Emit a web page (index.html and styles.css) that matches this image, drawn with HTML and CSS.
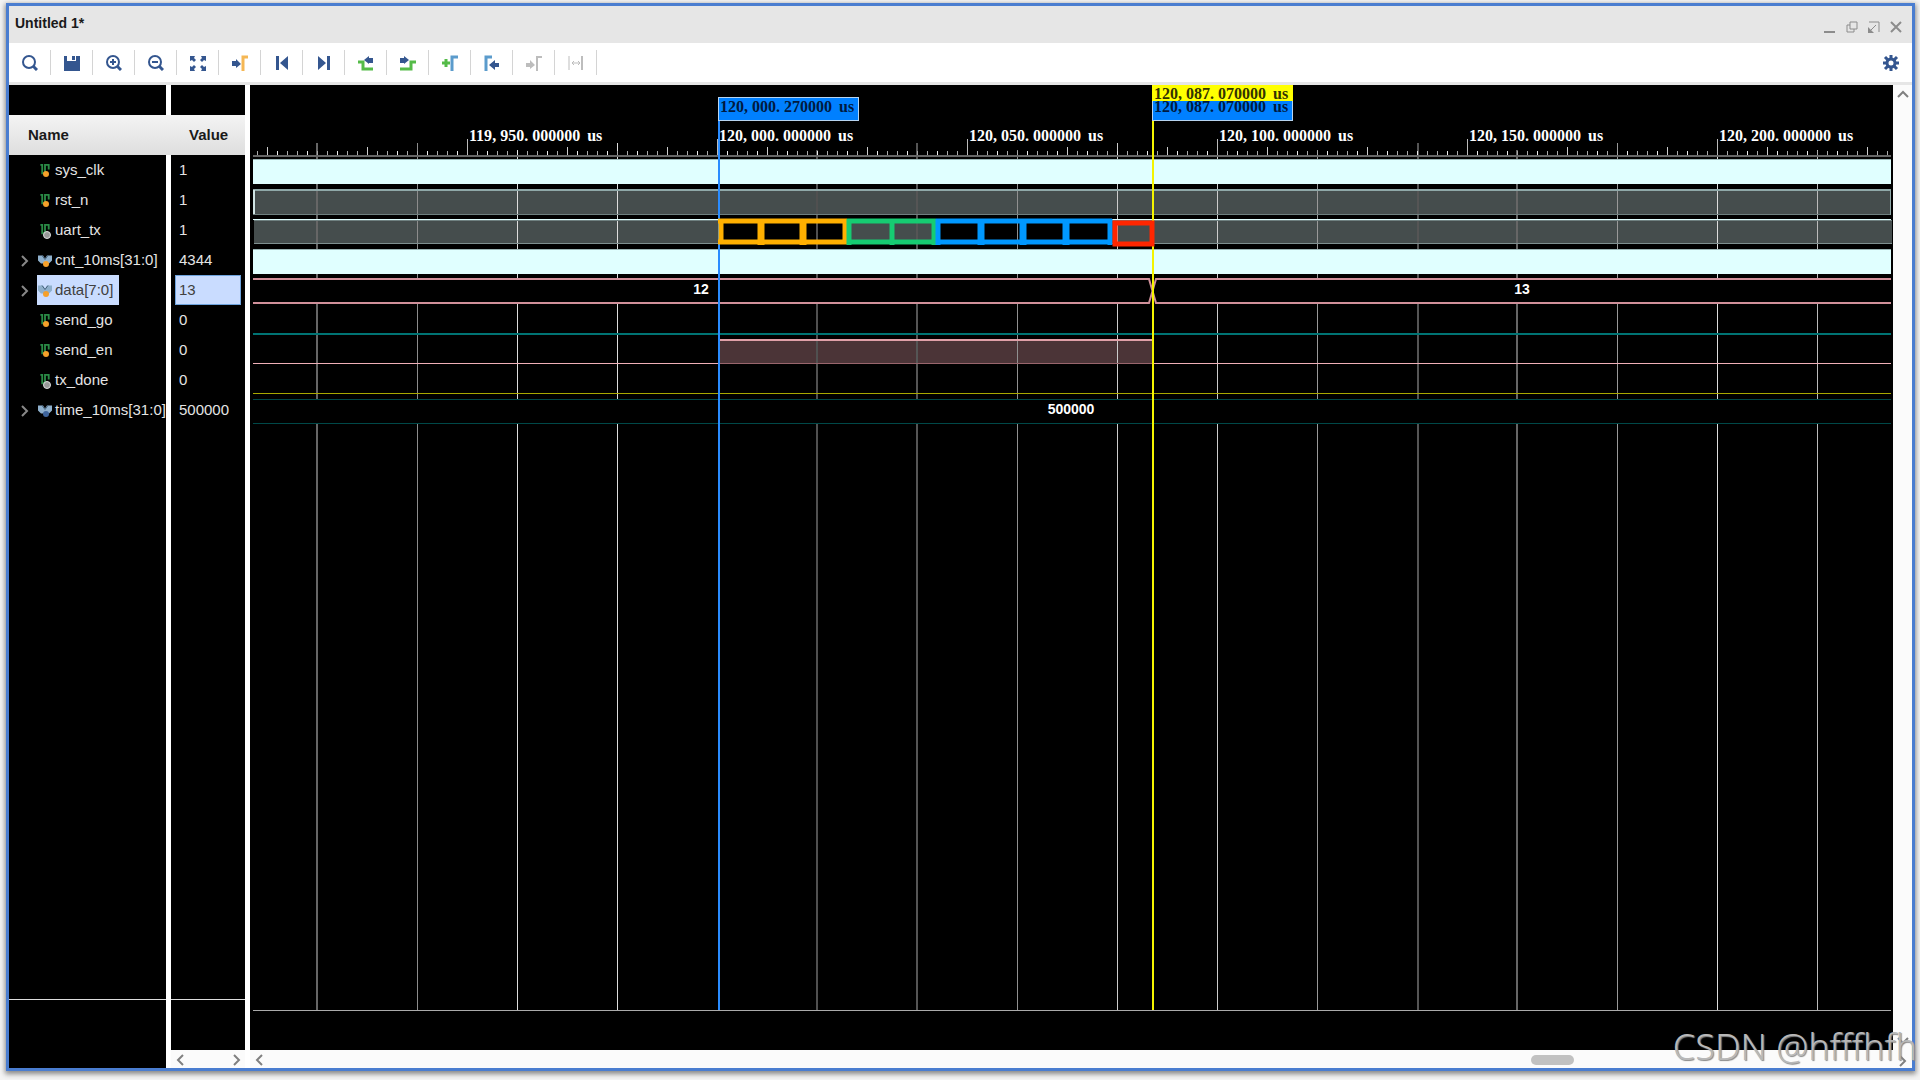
FILE: index.html
```html
<!DOCTYPE html>
<html lang="en">
<head>
<meta charset="utf-8">
<title>Untitled 1*</title>
<link rel="stylesheet" href="styles.css">
</head>
<body>
<svg class="defs" aria-hidden="true">
  <symbol id="scalar" viewBox="0 0 12 14"><path d="M1 1h2v9h3M6 10V1h4v5" fill="none" stroke="#2a8a45" stroke-width="2"/></symbol>
  <symbol id="bus" viewBox="0 0 14 12"><path d="M0 1h5l2 3 2-3h5v5l-3 3H3L0 6z" fill="#8fb0cc"/><path d="M4 1l3 4 3-4" fill="none" stroke="#46647e"/></symbol>
  <symbol id="chev" viewBox="0 0 8 12"><path d="M1 1l5 5-5 5" fill="none" stroke="currentColor" stroke-width="2"/></symbol>
</svg>
<main class="window">
  <header class="titlebar">
    <h1>Untitled 1*</h1>
    <div class="controls">
      <button aria-label="Minimize"><svg width="14" height="14"><path d="M1 12h11" stroke-width="2"/></svg></button>
      <button aria-label="Restore"><svg width="14" height="14"><path d="M5 2h7v7H5zM5 5H2v7h7V9" /></svg></button>
      <button aria-label="Float"><svg width="14" height="14"><path d="M2 2h10v10M9 5L4 10"/><path class="tip" d="M1 7v6h6z"/></svg></button>
      <button aria-label="Close"><svg width="14" height="14"><path d="M2 2l10 10M12 2L2 12" stroke-width="2"/></svg></button>
    </div>
  </header>
  <nav class="toolbar">
    <button aria-label="Search"><svg viewBox="0 0 16 16"><circle cx="7" cy="7" r="6"/><path d="M11 11l4 4" stroke-width="3"/></svg></button>
    <button aria-label="Save"><svg viewBox="0 0 16 16"><path class="f" d="M0 1h3v5h9V1h4v15H0zM8 1h3v4H8z"/></svg></button>
    <button aria-label="Zoom in"><svg viewBox="0 0 16 16"><circle cx="7" cy="7" r="6"/><path d="M11 11l4 4" stroke-width="3"/><path d="M4 7h6M7 4v6"/></svg></button>
    <button aria-label="Zoom out"><svg viewBox="0 0 16 16"><circle cx="7" cy="7" r="6"/><path d="M11 11l4 4" stroke-width="3"/><path d="M4 7h6"/></svg></button>
    <button aria-label="Zoom fit"><svg viewBox="0 0 16 16"><path class="f" d="M0 1h5L4 3l2 2-2 2-2-2-2 1zM16 1v5l-2-1-2 2-2-2 2-2-1-2zM0 16v-5l2 1 2-2 2 2-2 2 1 2zM16 16h-5l1-2-2-2 2-2 2 2 2-1z"/></svg></button>
    <button aria-label="Go to cursor"><svg viewBox="0 0 16 16"><path class="f" d="M0 6h4V4l5 5-5 4v-2H0z"/><path class="amber" d="M11 16V2h5"/></svg></button>
    <button aria-label="Go to start"><svg viewBox="0 0 16 16"><path class="f" d="M2 1h3v14H2zM14 1v14L6 8z"/></svg></button>
    <button aria-label="Go to end"><svg viewBox="0 0 16 16"><path class="f" d="M2 1v14l8-7zM11 1h3v14h-3z"/></svg></button>
    <button aria-label="Previous transition"><svg viewBox="0 0 16 16"><path class="green" d="M0 7h5v7h10"/><path class="f" d="M15 3h-4V1L6 5l5 4V8h4z"/></svg></button>
    <button aria-label="Next transition"><svg viewBox="0 0 16 16"><path class="green" d="M0 14h11V7h5"/><path class="f" d="M0 3h4V1l5 4-5 4V8H0z"/></svg></button>
    <button aria-label="Add marker"><svg viewBox="0 0 16 16"><path class="green" d="M0 8h8M4 4v8"/><path class="sky" d="M10 16V2h6"/></svg></button>
    <button aria-label="Previous marker"><svg viewBox="0 0 16 16"><path class="sky" d="M2 16V2h6"/><path class="f" d="M15 8h-4V5l-6 5 6 5v-3h4z"/></svg></button>
    <button aria-label="Next marker" disabled><svg viewBox="0 0 16 16"><path class="f" d="M0 8h4V5l5 5-5 4v-2H0z"/><path d="M11 16V2h5"/></svg></button>
    <button aria-label="Swap cursors" disabled><svg viewBox="0 0 16 16"><path d="M1 1v14M4 8h8M6 6L4 8l2 2M10 6l2 2-2 2" stroke-width="1"/><path d="M14 1v14"/></svg></button>
    <button class="settings" aria-label="Settings"><svg viewBox="0 0 16 16"><circle cx="8" cy="8" r="4" stroke-width="3"/><path d="M8 0v4M8 12v4M0 8h4M12 8h4M2 2l3 3M11 11l3 3M14 2l-3 3M5 11l-3 3" stroke-width="3"/></svg></button>
  </nav>
  <div class="panes">
    <section class="pane names">
      <table>
        <thead><tr><th>Name</th></tr></thead>
        <tbody>
          <tr><td><span class="sig in"><svg><use href="#scalar"/></svg>sys_clk</span></td></tr>
          <tr><td><span class="sig in"><svg><use href="#scalar"/></svg>rst_n</span></td></tr>
          <tr><td><span class="sig out"><svg><use href="#scalar"/></svg>uart_tx</span></td></tr>
          <tr><td><button class="expand" aria-label="Expand cnt_10ms"><svg><use href="#chev"/></svg></button><span class="sig in"><svg><use href="#bus"/></svg>cnt_10ms[31:0]</span></td></tr>
          <tr><td><button class="expand" aria-label="Expand data"><svg><use href="#chev"/></svg></button><span class="sig in selected"><svg><use href="#bus"/></svg>data[7:0]</span></td></tr>
          <tr><td><span class="sig in"><svg><use href="#scalar"/></svg>send_go</span></td></tr>
          <tr><td><span class="sig in"><svg><use href="#scalar"/></svg>send_en</span></td></tr>
          <tr><td><span class="sig out"><svg><use href="#scalar"/></svg>tx_done</span></td></tr>
          <tr><td><button class="expand" aria-label="Expand time_10ms"><svg><use href="#chev"/></svg></button><span class="sig param"><svg><use href="#bus"/></svg>time_10ms[31:0]</span></td></tr>
        </tbody>
      </table>
      <div class="foot"></div>
    </section>
    <section class="pane values">
      <table>
        <thead><tr><th>Value</th></tr></thead>
        <tbody>
          <tr><td>1</td></tr><tr><td>1</td></tr><tr><td>1</td></tr><tr><td>4344</td></tr>
          <tr><td><span class="picked">13</span></td></tr>
          <tr><td>0</td></tr><tr><td>0</td></tr><tr><td>0</td></tr><tr><td>500000</td></tr>
        </tbody>
      </table>
      <div class="foot"></div>
      <div class="hscroll">
        <button aria-label="Scroll left"><svg class="flip"><use href="#chev"/></svg></button>
        <button aria-label="Scroll right"><svg><use href="#chev"/></svg></button>
      </div>
    </section>
    <section class="wave">
      <div class="canvas">
        <svg id="plot" aria-hidden="true"></svg>
        <span class="time" style="left:217px">119<i>,</i>950<i>.</i>000000 <b>us</b></span>
        <span class="time" style="left:467px">120<i>,</i>000<i>.</i>000000 <b>us</b></span>
        <span class="time" style="left:717px">120<i>,</i>050<i>.</i>000000 <b>us</b></span>
        <span class="time" style="left:967px">120<i>,</i>100<i>.</i>000000 <b>us</b></span>
        <span class="time" style="left:1217px">120<i>,</i>150<i>.</i>000000 <b>us</b></span>
        <span class="time" style="left:1467px">120<i>,</i>200<i>.</i>000000 <b>us</b></span>
        <span class="time flag" style="left:468px">120<i>,</i>000<i>.</i>270000 <b>us</b></span>
        <span class="time flag" style="left:902px">120<i>,</i>087<i>.</i>070000 <b>us</b></span>
        <span class="time flag cursor" style="left:902px">120<i>,</i>087<i>.</i>070000 <b>us</b></span>
        <span class="val data" style="left:451px">12</span>
        <span class="val data" style="left:1272px">13</span>
        <span class="val param" style="left:821px">500000</span>
      </div>
      <div class="hscroll">
        <button aria-label="Scroll left"><svg class="flip"><use href="#chev"/></svg></button>
        <div class="track"><div class="thumb"></div></div>
      </div>
    </section>
    <div class="vscroll">
      <button aria-label="Scroll up"><svg class="up"><use href="#chev"/></svg></button>
      <div class="ends">
        <button aria-label="Scroll down"><svg class="down"><use href="#chev"/></svg></button>
        <button aria-label="Scroll right"><svg><use href="#chev"/></svg></button>
      </div>
    </div>
  </div>
</main>
<div class="watermark">CSDN @hfffhfh</div>
<script src="plot.js"></script>
</body>
</html>
```

FILE: styles.css
```css
* { box-sizing: border-box; }
body {
  margin: 0;
  height: 100vh;
  padding: 3px 5px 9px 6px;
  display: flex;
  background: #f4f4f4;
  font: 15px/18px "Liberation Sans", Arial, sans-serif;
  color: #1a1a1a;
}
button { border: 0; padding: 0; background: none; color: inherit; display: flex; align-items: center; justify-content: center; }
.defs { position: absolute; width: 0; height: 0; }
.window {
  flex: 1;
  min-width: 0;
  display: flex;
  flex-direction: column;
  border: 3px solid #4a7dd0;
  box-shadow: 0 2px 5px 1px #888;
  background: #fff;
}
.titlebar { height: 37px; display: flex; justify-content: space-between; background: #e6e6e6; padding: 0 9px 0 6px; }
.titlebar h1 { margin: 8px 0 0; font-size: 14px; line-height: 18px; }
.controls { display: flex; gap: 8px; align-items: center; padding-top: 5px; }
.controls svg { fill: none; stroke: #8c8c8c; stroke-width: 1; display: block; }
.controls .tip { fill: #8c8c8c; stroke: none; }
.toolbar { height: 42px; display: flex; border-bottom: 3px solid #e6e6e6; padding: 7px 0; }
.toolbar button { width: 42px; height: 25px; border-right: 1px solid #d4d4d4; color: #34568f; }
.toolbar button:disabled { color: #bdbdbd; }
.toolbar svg { width: 16px; height: 16px; fill: none; stroke: currentColor; stroke-width: 2; }
.toolbar .f { fill: currentColor; stroke: none; fill-rule: evenodd; }
.toolbar .amber { stroke: #f5b754; stroke-width: 3; }
.toolbar .green { stroke: #55bb48; stroke-width: 3; }
.toolbar .sky { stroke: #5b9bcc; stroke-width: 3; }
.toolbar .settings { margin-left: auto; border: 0; }

.panes { flex: 1; min-height: 0; display: flex; }
.pane { display: flex; flex-direction: column; background: #000; padding-top: 30px; }
.names { width: 157px; margin-right: 5px; }
.values { width: 74px; margin-right: 5px; }
table { border-collapse: collapse; width: 100%; }
th { height: 40px; padding: 0; background: linear-gradient(#f4f4f4, #dedede); font-weight: bold; text-align: left; }
.names th { padding-left: 19px; }
.values th { padding-left: 18px; }
td { height: 30px; padding: 0; color: #e4e4e4; white-space: nowrap; position: relative; }
.values td { padding-left: 8px; }
.sig { display: inline-flex; align-items: center; height: 30px; margin-left: 28px; padding: 0 6px 0 18px; position: relative; }
.sig svg { position: absolute; left: 1px; top: 9px; width: 14px; height: 13px; }
.sig::after {
  content: "";
  position: absolute;
  left: 6px;
  top: 16px;
  width: 6px;
  height: 6px;
  border-radius: 50%;
  background: #f5a02a;
}
.sig.out::after { background: #999; border: 1px solid #ddd; }
.sig.param::after { background: #3e649c; }
.selected, .picked { background: #c9dcff; color: #404040; }
.picked { display: flex; align-items: center; height: 30px; margin: 0 4px 0 -4px; padding-left: 3px; border: 1px solid #6ea3dd; }
.expand { position: absolute; left: 12px; top: 10px; color: #888; }
.expand svg, .hscroll svg, .vscroll svg { width: 8px; height: 12px; display: block; }
.foot { margin-top: auto; height: 69px; border-top: 1px solid #ddd; }
.values .foot { height: 51px; }
.hscroll { height: 18px; display: flex; align-items: center; justify-content: space-between; padding: 2px 4px 0 5px; background: #fbfbfb; color: #808080; }
.hscroll .track { flex: 1; display: flex; }
.thumb { width: 43px; height: 10px; border-radius: 5px; background: #c1c1c1; margin-left: 78%; }
.wave .hscroll { padding-left: 5px; }
.flip { transform: scaleX(-1); }
.up { transform: rotate(-90deg); }
.down { transform: rotate(90deg); }
.vscroll { width: 19px; background: #fbfbfb; color: #808080; display: flex; flex-direction: column; align-items: center; justify-content: space-between; padding: 3px 0 1px; }
.vscroll .ends { display: flex; flex-direction: column; align-items: center; gap: 8px; }

.wave { flex: 1; min-width: 0; display: flex; flex-direction: column; background: #000; }
.canvas { flex: 1; min-height: 0; position: relative; overflow: hidden; }
#plot { position: absolute; width: 100%; height: 100%; }
.time {
  position: absolute;
  top: 42px;
  padding-left: 2px;
  font: bold 16px/18px "Liberation Serif", "Times New Roman", serif;
  color: #fff;
  white-space: nowrap;
}
.time i { font-style: normal; padding-right: 4px; }
.time b { padding-left: 3px; }
.flag { top: 12px; width: 141px; height: 24px; line-height: 18px; background: #0080ff; color: #001a40; border: 1px solid #b8d4f0; padding-left: 1px; }
.flag.cursor { top: 0; height: 16px; line-height: 18px; background: #ff0; color: #333300; border: 0; padding-left: 2px; overflow: hidden; }
.val { position: absolute; transform: translateX(-50%); color: #fff; font-weight: bold; font-size: 14px; line-height: 18px; }
.val.data { top: 195px; }
.val.param { top: 315px; }
.watermark {
  position: absolute;
  right: 3px;
  bottom: 9px;
  font: 36px/48px "Noto Sans", sans-serif;
  font-weight: 300;
  color: #b8b8b8;
  text-shadow: 1px 1px 1px #888;
  white-space: nowrap;
}
```

FILE: plot.js
```js
const NS = 'http://www.w3.org/2000/svg';
const plot = document.getElementById('plot');

function rect(x, y, w, h, fill, stroke, sw) {
  const r = document.createElementNS(NS, 'rect');
  const a = { x, y, width: w, height: h, fill, stroke: stroke || 'none', 'stroke-width': sw || 0 };
  for (const k in a) r.setAttribute(k, a[k]);
  plot.append(r);
}
function path(d, stroke, w) {
  const p = document.createElementNS(NS, 'path');
  p.setAttribute('d', d);
  p.setAttribute('fill', 'none');
  p.setAttribute('stroke', stroke);
  p.setAttribute('stroke-width', w);
  plot.append(p);
}

// Ten microseconds are 50px; 120,000 us is at ORIGIN.
const ORIGIN = 467;
const MARK = 468;
const CURSOR = 902;
// x, colour, width, top of each grid line
const GRID = [
  [66, '#666', 2, 58], [167, '#8c8c8c', 1, 58], [267, '#ddd', 1, 65], [367, '#ddd', 1, 58],
  [566, '#505050', 2, 65], [666, '#555', 2, 58], [767, '#909090', 1, 65], [867, '#ccc', 1, 58],
  [967, '#ccc', 1, 54], [1067, '#999', 1, 65], [1167, '#555', 2, 58], [1266, '#666', 2, 65],
  [1367, '#999', 1, 58], [1467, '#ddd', 1, 54], [1567, '#bbb', 1, 65]
];

function draw() {
  plot.replaceChildren();
  const left = 3;
  const right = plot.clientWidth - 2;
  const w = right - left;
  const bottom = plot.clientHeight - 40;

  // shaded levels below the grid
  rect(left, 106, w, 24, '#454d4d');
  rect(left + 1, 136, w, 23, '#454d4d');
  rect(MARK, 135, 129, 24, '#000');
  rect(686, 135, 176, 24, '#000');
  rect(MARK + 2, 256, CURSOR - MARK - 2, 22, '#4b3437');

  for (const [x, c, t, y] of GRID) rect(x, y, t, bottom - y, c);
  for (let x = ORIGIN - 460; x < right; x += 10) {
    const step = (x - ORIGIN) / 50;
    if (step % 5 === 0) rect(x, 54, 1, 18, '#bbb');
    else if (Number.isInteger(step) && step % 2) rect(x, 62, 1, 9, '#ccc');
    else rect(x, 66, 1, 5, x % 3 ? '#aaa' : '#eee');
  }
  rect(left, 70, w, 2, '#666');
  rect(left, bottom, w, 1, '#aaa');

  // sys_clk and cnt_10ms
  rect(left, 74, w, 25, '#e0ffff');
  rect(left, 74, w, 1, '#9ab5b5');
  rect(left, 164, w, 25, '#e0ffff');
  rect(left, 164, w, 1, '#9ab5b5');

  // rst_n and uart_tx
  rect(left, 104, w, 2, '#8fa8a8');
  rect(left, 129, w, 1, '#6f8080');
  rect(left, 105, 2, 24, '#cfe4e4');
  rect(left, 134, w, 1, '#e0ffff');
  rect(left + 1, 135, w, 1, '#6f8080');
  rect(left + 1, 158, w, 1, '#7f9090');
  rect(right - 1, 105, 1, 25, '#8fa8a8');

  // data[7:0]
  rect(left, 194, w, 25, '#000');
  path(`M${left} 194H899L906 218H${right}M${left} 218H899L906 194H${right}`, '#d0909a', 2);

  // send_go, send_en, tx_done
  rect(left, 248, w, 2, '#007474');
  rect(left, 278, w, 1, '#98656c');
  path(`M${left} 278.5H${MARK}M${CURSOR} 278.5H${right}`, '#f0b0b8', 1);
  rect(MARK + 2, 254, CURSOR - MARK - 2, 2, '#e0a0a8');
  rect(left, 308, w, 1, '#a8a800');

  // time_10ms
  rect(left, 314, w, 25, '#000');
  rect(left, 314, w, 1, '#004848');
  rect(left, 338, w, 1, '#004848');

  rect(MARK, 36, 2, bottom - 36, '#2a8cff');
  rect(CURSOR, 16, 2, bottom - 16, '#f4f400');

  // frame bits of the two bytes
  path('M471 136V158M511 134V160M553 134V160M595 136V158', '#ffb000', 5);
  path('M511 134V160M553 134V160', '#ffb000', 7);
  path('M468 136H597M468 157H597', '#ffb000', 5);
  path('M599 134V160M642 134V160M684 134V160M597 136H686M597 157H686', '#16cc72', 5);
  path('M688 134V160M860 134V160M686 136H862M686 157H862', '#0098ff', 5);
  path('M731 134V160M773 134V160M816 134V160', '#0098ff', 7);
  rect(865, 138, 37, 21, 'none', '#ff2600', 5);
}
draw();
addEventListener('resize', draw);
```
